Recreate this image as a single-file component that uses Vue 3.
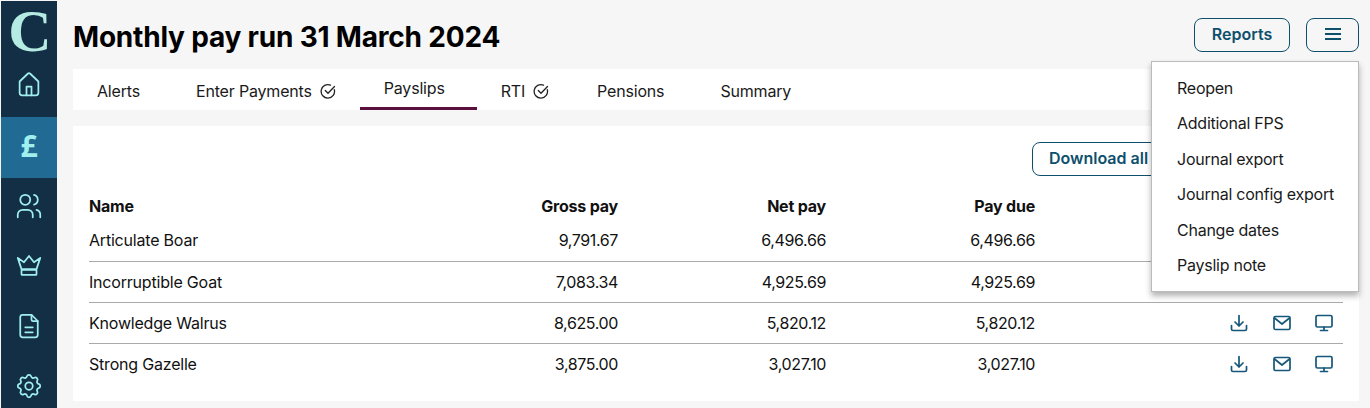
<script setup>
const tabs = [
  { label: 'Alerts' },
  { label: 'Enter Payments', check: true },
  { label: 'Payslips', active: true },
  { label: 'RTI', check: true },
  { label: 'Pensions' },
  { label: 'Summary' },
]
const rows = [
  { name: 'Articulate Boar', gross: '9,791.67', net: '6,496.66', due: '6,496.66' },
  { name: 'Incorruptible Goat', gross: '7,083.34', net: '4,925.69', due: '4,925.69' },
  { name: 'Knowledge Walrus', gross: '8,625.00', net: '5,820.12', due: '5,820.12' },
  { name: 'Strong Gazelle', gross: '3,875.00', net: '3,027.10', due: '3,027.10' },
]
const menu = ['Reopen', 'Additional FPS', 'Journal export', 'Journal config export', 'Change dates', 'Payslip note']
</script>

<template>
  <div class="page">
    <aside class="side">
      <div class="logo">C</div>
      <div class="nav home">
        <svg viewBox="0 0 24 24"><path d="M4.500 10 11 3.800a1.500 1.500 0 0 1 2 0L19.500 10v9a2 2 0 0 1-2 2h-11a2 2 0 0 1-2-2z" /><path d="M10 21v-7h4v7" /></svg>
      </div>
      <div class="nav active"><span class="pound">£</span></div>
      <div class="nav users">
        <svg viewBox="0 0 24 24"><circle cx="9" cy="7" r="4" /><path d="M3 21v-2a4 4 0 0 1 4-4h4a4 4 0 0 1 4 4v2" /><path d="M16 3.130a4 4 0 0 1 0 7.750" /><path d="M21 21v-2a4 4 0 0 0-3-3.850" /></svg>
      </div>
      <div class="nav">
        <svg viewBox="0 0 24 24"><path d="M6 14.500 3 5.500l5 3.500 4-5 4 5 5-3.500-3 9z" /><rect x="6" y="15" width="12" height="4" rx=".5" /></svg>
      </div>
      <div class="nav">
        <svg viewBox="0 0 24 24"><path d="M14 3v4a1 1 0 0 0 1 1h4" /><path d="M17 21H7a2 2 0 0 1-2-2V5a2 2 0 0 1 2-2h7l5 5v11a2 2 0 0 1-2 2z" /><path d="M9 13h6M9 17h6" /></svg>
      </div>
      <div class="nav">
        <svg viewBox="0 0 24 24"><path d="M10.325 4.317c.426-1.756 2.924-1.756 3.350 0a1.724 1.724 0 0 0 2.573 1.066c1.543-.94 3.310.826 2.370 2.370a1.724 1.724 0 0 0 1.065 2.572c1.756.426 1.756 2.924 0 3.350a1.724 1.724 0 0 0-1.066 2.573c.94 1.543-.826 3.310-2.370 2.370a1.724 1.724 0 0 0-2.572 1.065c-.426 1.756-2.924 1.756-3.350 0a1.724 1.724 0 0 0-2.573-1.066c-1.543.94-3.310-.826-2.370-2.370a1.724 1.724 0 0 0-1.065-2.572c-1.756-.426-1.756-2.924 0-3.350a1.724 1.724 0 0 0 1.066-2.573c-.94-1.543.826-3.310 2.370-2.370 1 .608 2.296.07 2.572-1.065z" /><circle cx="12" cy="12" r="3" /></svg>
      </div>
    </aside>

    <main class="main">
      <header class="head">
        <h1>Monthly pay run 31 March 2024</h1>
        <div class="actions">
          <button class="btn">Reports</button>
          <button class="btn burger">
            <svg viewBox="0 0 18 14"><path d="M1 2h16M1 7h16M1 12h16" /></svg>
          </button>
        </div>
      </header>

      <nav class="tabs">
        <div v-for="t in tabs" :key="t.label" class="tab" :class="{ on: t.active }">
          <span class="tab-label">{{ t.label }}</span>
          <svg v-if="t.check" class="check" viewBox="0 0 16 16"><path d="M14.300 6.600A6.700 6.700 0 1 1 10.500 2.200" /><path d="M5.300 7.500 8 10.200l6.500-6.700" /></svg>
        </div>
      </nav>

      <section class="card">
        <div class="card-top"><button class="btn dl">Download all</button></div>
        <div class="row hdr">
          <div class="c-name">Name</div><div class="c-g">Gross pay</div><div class="c-n">Net pay</div><div class="c-d">Pay due</div>
        </div>
        <div v-for="r in rows" :key="r.name" class="row body">
          <div class="c-name">{{ r.name }}</div>
          <div class="c-g">{{ r.gross }}</div>
          <div class="c-n">{{ r.net }}</div>
          <div class="c-d">{{ r.due }}</div>
          <div class="c-i">
            <svg viewBox="0 0 18 18"><path d="M9 1.500v10.500M5 8l4 4 4-4M1.500 11.500V15a1.500 1.500 0 0 0 1.500 1.500h12a1.500 1.500 0 0 0 1.500-1.500v-3.500" /></svg>
            <svg viewBox="0 0 18 18"><rect x="1" y="2.500" width="16" height="13" rx="1.500" /><path d="m1.500 4 7.500 6 7.500-6" /></svg>
            <svg viewBox="0 0 18 18"><rect x="1" y="1.500" width="16" height="11.500" rx="1.500" /><path d="M9 13v3.500M5.500 16.500h7" /></svg>
          </div>
        </div>
      </section>
    </main>

    <ul class="menu">
      <li v-for="m in menu" :key="m">{{ m }}</li>
    </ul>
  </div>
</template>

<style>
html, body { margin: 0; overflow: hidden; }
</style>

<style scoped>
.page {
  position: relative;
  display: flex;
  width: 1370px;
  height: 408px;
  overflow: hidden;
  background: #f6f6f6;
  font-family: Inter, "Open Sans", sans-serif;
  font-size: 16px;
  color: #111;
  box-sizing: border-box;
  padding-top: 1px;
}
.side {
  width: 56px;
  margin-left: 1px;
  background: #122f45;
  flex: none;
  display: flex;
  flex-direction: column;
}
.logo {
  height: 53px;
  flex: none;
  padding: 7px 0 0 2px;
  box-sizing: border-box;
  text-align: center;
  font-family: "Liberation Serif", serif;
  font-weight: 700;
  font-size: 60px;
  line-height: 46px;
  color: #b5ebe3;
}
.nav {
  height: 60px;
  display: flex;
  align-items: center;
  justify-content: center;
  flex: none;
}
.nav svg {
  width: 30px;
  height: 30px;
  fill: none;
  stroke: #a0efee;
  stroke-width: 1.400;
  stroke-linejoin: round;
  stroke-linecap: round;
}
.home { margin-bottom: 3px; }
.users { margin-top: -2px; }
.active { background: #216a94; height: 61px; }
.pound {
  font-family: "Open Sans", sans-serif;
  font-size: 30px;
  font-weight: 700;
  color: #a0efee;
  position: relative;
  top: -2px;
}
.main { flex: 1; padding: 0 11px 0 16px; min-width: 0; }
.head {
  display: flex;
  justify-content: space-between;
  align-items: center;
  height: 68px;
}
h1 {
  margin: 0;
  font-size: 28px;
  font-weight: 700;
  color: #000;
  position: relative;
  top: 2px;
  letter-spacing: -.2px;
}
.actions { display: flex; gap: 16px; margin-top: -1px; }
.btn {
  height: 34px;
  border: 1px solid #0e4f6c;
  border-radius: 8px;
  background: transparent;
  color: #0e4f6c;
  font: 600 16px Inter, sans-serif;
  padding: 0 16px 2px;
  box-sizing: border-box;
}
.actions .btn { width: 96px; padding: 0 0 2px; }
.actions .burger { width: 53px; padding: 0 0 2px; display: flex; align-items: center; justify-content: center; }
.burger svg { width: 18px; height: 14px; fill: none; stroke: #0e4f6c; stroke-width: 2; }
.tabs {
  display: flex;
  height: 41px;
  background: #fff;
  letter-spacing: -.18px;
}
.tab {
  display: flex;
  align-items: center;
  padding: 0 24px;
  box-sizing: border-box;
  height: 41px;
  color: #1a1a1a;
}
.tab.on { border-bottom: 3px solid #5a0f3c; }
.tab-label { margin-right: 8px; position: relative; top: 1px; }
.tab.on .tab-label { top: 0; }
.check { width: 16px; height: 16px; fill: none; stroke: #222; stroke-width: 1.300; stroke-linecap: round; position: relative; top: 1px; }
.card {
  background: #fff;
  margin-top: 16px;
  height: 275px;
  padding: 16px 16px 0;
  box-sizing: border-box;
}
.card-top { height: 49px; padding-left: 943px; }
.dl { width: 160px; text-align: left; }
.row {
  display: flex;
  align-items: center;
  width: 1254px;
  letter-spacing: -.2px;
}
.row > div { flex: none; }
.hdr { height: 30px; font-weight: 700; color: #111; }
.body { height: 41px; border-bottom: 1px solid #aaa; box-sizing: border-box; }
.hdr + .body { height: 41px; padding-bottom: 3px; }
.body:last-child { border-bottom-color: transparent; }
.body .c-g, .body .c-n, .body .c-d { letter-spacing: -.38px; }
.c-name { width: 320px; }
.c-g { width: 209px; text-align: right; }
.c-n { width: 208px; text-align: right; }
.c-d { width: 209px; text-align: right; }
.c-i {
  margin-left: auto;
  display: flex;
  gap: 24.500px;
  justify-content: flex-end;
  width: 308px;
  padding-right: 10px;
  box-sizing: border-box;
}
.c-i svg {
  width: 18px;
  height: 18px;
  fill: none;
  stroke: #14577a;
  stroke-width: 1.700;
  stroke-linecap: round;
  stroke-linejoin: round;
}
.menu {
  position: absolute;
  left: 1151px;
  top: 61px;
  width: 208px;
  height: 231px;
  margin: 0;
  padding: 9px 0 0 25px;
  box-sizing: border-box;
  list-style: none;
  background: #fff;
  border: 1px solid #bbb;
  box-shadow: 0 4px 6px rgba(0,0,0,.3);
  letter-spacing: -.25px;
}
.menu li { height: 35.400px; line-height: 35.400px; white-space: nowrap; color: #1a1a1a; }
</style>
